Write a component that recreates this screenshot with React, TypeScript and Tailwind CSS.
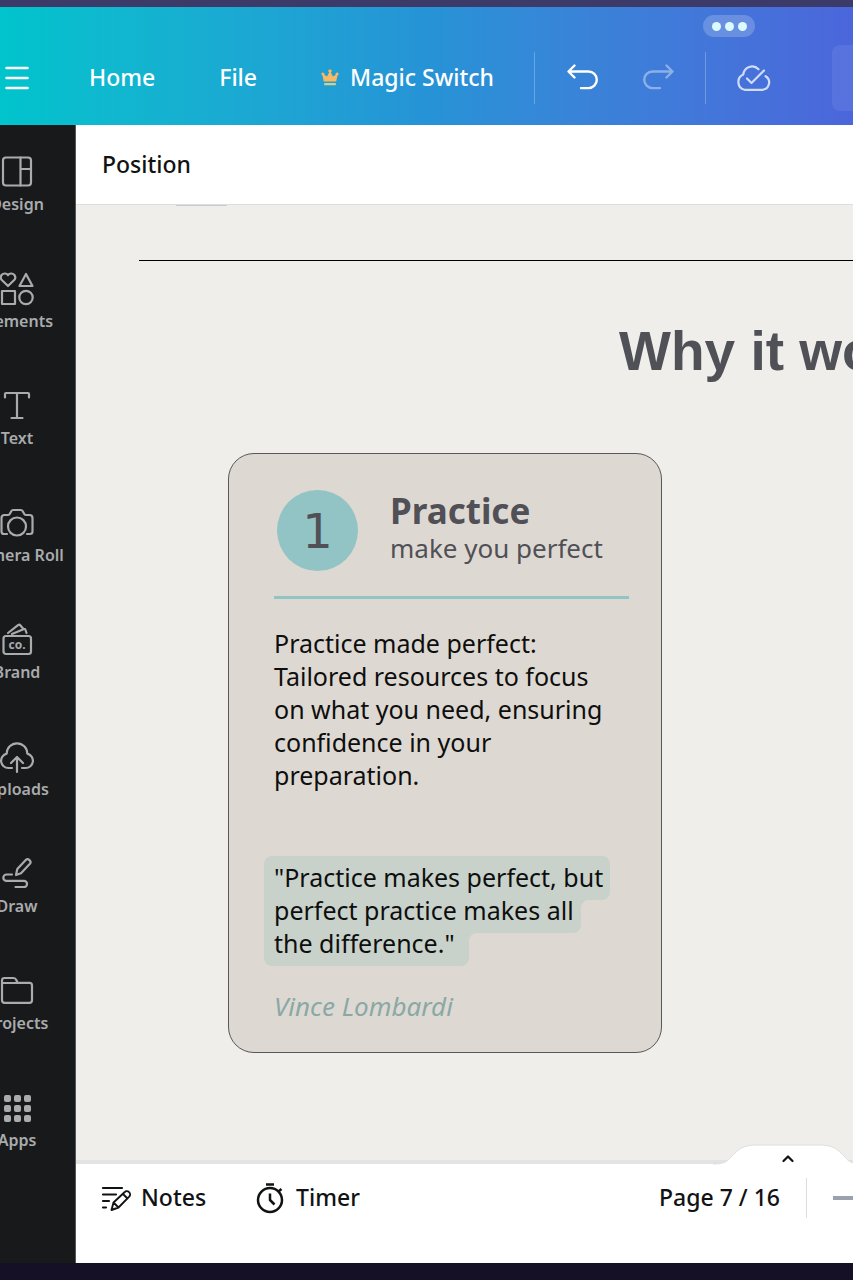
import type { ReactNode } from "react";

type SideItem = { label: string; icon: ReactNode };

const sideItems: SideItem[] = [
  {
    label: "Design",
    icon: (
      <>
        <rect x="3" y="2.5" width="28" height="28" rx="3" />
        <path d="M20.5 2.5v28M20.5 14h10.5" />
      </>
    ),
  },
  {
    label: "Elements",
    icon: (
      <>
        <path d="M8 14 1.800 8a4 4 0 0 1 0-5.200a4 4 0 0 1 6.200.4a4 4 0 0 1 6.200-.4a4 4 0 0 1 0 5.200Z" />
        <path d="M26 2 19.500 14h13Z" />
        <rect x="2" y="19" width="13" height="13" />
        <circle cx="26" cy="25.500" r="6.700" />
      </>
    ),
  },
  {
    label: "Text",
    icon: <path d="M5 8.500V5q0-1 1-1h22q1 0 1 1v3.500M17 4v25M11.500 29h11" />,
  },
  {
    label: "Camera Roll",
    icon: (
      <>
        <path d="M7 28H4q-2.500 0-2.500-2.500V12q0-3 3-3H8q1.500 0 2-1.500l.7-1.300Q11.500 4 13.500 4h7q2 0 2.800 2.200l.7 1.300q.5 1.500 2 1.500h3.500q3 0 3 3v13.500Q32.500 28 30 28h-3" />
        <circle cx="17" cy="20.500" r="9" />
      </>
    ),
  },
  {
    label: "Brand",
    icon: (
      <>
        <rect x="3.500" y="13" width="27.500" height="18" rx="2.500" />
        <path d="M8 10 18 2.200q1.500-1 2.500.3l2.500 3M12 11l11.500-4.800q1.500-.6 2 .8l1 3" />
        <text x="17" y="25.500" textAnchor="middle" fill="currentColor" stroke="none" fontSize="12" fontWeight="700" fontFamily="Noto Sans, sans-serif">
          co.
        </text>
      </>
    ),
  },
  {
    label: "Uploads",
    icon: (
      <>
        <path d="M12 28H8.500a7.300 7.300 0 0 1-1.800-14.400a10.300 10.300 0 0 1 20.600 0A7.300 7.300 0 0 1 25.500 28H22" />
        <path d="M17 32V17.500M11 23l6-6 6 6" />
      </>
    ),
  },
  {
    label: "Draw",
    icon: (
      <>
        <path d="m16 18 1.300-6L26 2.800q1.500-1.400 3.200.1l.6.600q1.600 1.600.1 3.300L21 16.200Z" />
        <path d="M12 17.500H6.500a3.200 3.200 0 0 0 0 6.400H24a3 3 0 0 1 0 6.100h-8.500" />
      </>
    ),
  },
  {
    label: "Projects",
    icon: (
      <path d="M2 9.500V6.500Q2 4 4.500 4h9q2 0 2.700 1.800l1.300 3H29.500q2.500 0 2.500 2.500v15q0 2.500-2.500 2.500h-25Q2 28.800 2 26.300V9h15.500" />
    ),
  },
  {
    label: "Apps",
    icon: (
      <g fill="currentColor" stroke="none">
        {[4, 14, 24].map((y) =>
          [4, 14, 24].map((x) => <rect key={`${x}-${y}`} x={x} y={y} width="7" height="7" rx="2" />),
        )}
      </g>
    ),
  },
];

function Header() {
  return (
    <header className="relative flex h-[118px] shrink-0 items-center overflow-hidden bg-linear-to-r from-[#00c4cc] via-[#2693d6] to-[#4b66db] pt-[24px] text-[23px] font-medium text-white">
      <button aria-label="Menu" className="ml-[5px] shrink-0">
        <svg width="24" height="24" viewBox="0 0 24 24" fill="none" stroke="currentColor" strokeWidth="2.500" strokeLinecap="round">
          <path d="M1.500 2h21M1.500 12h21M1.500 22h21" />
        </svg>
      </button>
      <a href="#home" className="ml-[60px] shrink-0 pb-[2px]">Home</a>
      <button className="ml-[64px] shrink-0 pb-[2px]">File</button>
      <button className="ml-[64px] flex shrink-0 items-center gap-[11px] pb-[2px] whitespace-nowrap">
        <svg width="18" height="18" viewBox="0 0 18 18" fill="#f7b965" className="mt-[2px]">
          <path d="M2.800 12.500 1.500 6.500a1.500 1.500 0 1 1 1.800-.8L6 7.500l2.200-4.200a1.600 1.600 0 1 1 1.600 0L12 7.500l2.700-1.800a1.500 1.500 0 1 1 1.800.8l-1.300 6Z" />
          <rect x="3" y="14" width="12" height="2.300" rx="1" fill="#cfd08f" />
        </svg>
        Magic Switch
      </button>
      <div className="ml-[40px] h-[52px] w-px shrink-0 bg-white/25" />
      <button aria-label="Undo" className="ml-[32px] shrink-0">
        <svg width="32" height="28" viewBox="0 0 32 28" fill="none" stroke="currentColor" strokeWidth="2.400" strokeLinecap="round" strokeLinejoin="round">
          <path d="m7.500 1.500-6 6 6 6M2 7.500h19.500a8.300 8.300 0 0 1 0 16.600H14" />
        </svg>
      </button>
      <button aria-label="Redo" className="ml-[44px] shrink-0 text-white/40">
        <svg width="32" height="28" viewBox="0 0 32 28" fill="none" stroke="currentColor" strokeWidth="2.400" strokeLinecap="round" strokeLinejoin="round">
          <path d="m23.500 1.500 6 6-6 6M29 7.500H9.500a8.300 8.300 0 0 0 0 16.600H17" />
        </svg>
      </button>
      <div className="ml-[30px] h-[52px] w-px shrink-0 bg-white/25" />
      <button aria-label="Saved" className="ml-[29px] shrink-0 text-white/75">
        <svg width="36" height="28" viewBox="0 0 36 28" fill="none" stroke="currentColor" strokeWidth="2.200" strokeLinecap="round" strokeLinejoin="round">
          <path d="M23.500 5.300A8.800 8.800 0 0 0 8.300 10.500A8.100 8.100 0 0 0 9.500 25.800H27A7.300 7.300 0 0 0 30.500 12.200" />
          <path d="m12 14.500 4.500 4.500L29 6.500" />
        </svg>
      </button>
      <button aria-label="Share" className="ml-[61px] h-[66px] w-[120px] shrink-0 rounded-lg bg-white/7" />
      <button aria-label="Window options" className="absolute top-[8px] left-[703px] flex h-[22px] w-[52px] items-center justify-center gap-[4px] rounded-full bg-white/20">
        <span className="size-[9px] rounded-full bg-[#dcfbff]" />
        <span className="size-[9px] rounded-full bg-[#dcfbff]" />
        <span className="size-[9px] rounded-full bg-[#dcfbff]" />
      </button>
    </header>
  );
}

function Sidebar() {
  return (
    <nav className="-ml-[41px] w-[117px] shrink-0 border-r border-[#55565a] bg-[#18191b]">
      {sideItems.map(({ label, icon }) => (
        <a key={label} href={`#${label}`} className="flex h-[117px] flex-col items-center pt-[30px] text-[#a9abad]">
          <svg width="34" height="34" viewBox="0 0 34 34" fill="none" stroke="currentColor" strokeWidth="2.200" strokeLinecap="round" strokeLinejoin="round" className="shrink-0 overflow-visible">
            {icon}
          </svg>
          <span className="mt-[3px] text-[16px] leading-[24px] font-semibold whitespace-nowrap">{label}</span>
        </a>
      ))}
    </nav>
  );
}

function PracticeCard() {
  return (
    <article className="relative ml-[152px] h-[600px] w-[434px] rounded-[26px] border border-[#58585a] bg-[#ddd9d2] px-[45px]">
      <div className="flex items-start pt-[36px]">
        <div className="flex size-[81px] items-center justify-center rounded-full bg-[#92c3c5] ml-[3px] font-['DejaVu_Sans'] text-[48px] leading-[48px] text-[#505056]">
          1
        </div>
        <div className="ml-[32px] whitespace-nowrap text-[#505056]">
          <h2 className="text-[35px] leading-[42px] font-bold">Practice</h2>
          <p className="text-[26px] leading-[32px]">make you perfect</p>
        </div>
      </div>
      <hr className="mt-[25px] -mr-[13px] h-[3px] border-0 bg-[#92c3c5]" />
      <p className="mt-[28px] text-[25px] leading-[33px] whitespace-nowrap text-[#0e0e0e]">
        Practice made perfect:
        <br />
        Tailored resources to focus
        <br />
        on what you need, ensuring
        <br />
        confidence in your
        <br />
        preparation.
      </p>
      <blockquote className="relative mt-[69px] text-[25px] leading-[33px] whitespace-nowrap text-[#0e0e0e]">
        <svg width="346" height="110" viewBox="0 0 346 110" fill="#c8d2cb" className="absolute -top-[5px] -left-[10px]">
          <path d="M8 0H338a8 8 0 0 1 8 8V36a8 8 0 0 1-8 8H325a8 8 0 0 0-8 8V69a8 8 0 0 1-8 8H213a8 8 0 0 0-8 8V102a8 8 0 0 1-8 8H8a8 8 0 0 1-8-8V8a8 8 0 0 1 8-8Z" />
        </svg>
        <p className="relative">
          "Practice makes perfect, but
          <br />
          perfect practice makes all
          <br />
          the difference."
        </p>
      </blockquote>
      <p className="mt-[30px] text-[26px] leading-[33px] text-[#8aa8a6] italic">Vince Lombardi</p>
    </article>
  );
}

function Footer() {
  return (
    <footer className="relative flex h-[103px] shrink-0 items-center border-t-4 border-[#e3e3e5] bg-white pr-[74px] pb-[32px] text-[23px] font-medium whitespace-nowrap text-[#111214]">
      <svg width="164" height="24" viewBox="0 0 164 24" className="absolute -top-[20px] right-[-16px]">
        <path d="M8 20C24 20 24 14 30 9C36 3 42 1 52 1H114C124 1 130 3 136 9C142 14 142 20 158 20V24H8Z" fill="#fff" />
        <path d="M8 20C24 20 24 14 30 9C36 3 42 1 52 1H114C124 1 130 3 136 9C142 14 142 20 158 20" fill="none" stroke="#dedee0" />
      </svg>
      <button aria-label="Show pages" className="absolute -top-[12px] right-[58px]">
        <svg width="14" height="12" viewBox="0 0 14 12" fill="none" stroke="currentColor" strokeWidth="2.200" strokeLinecap="round" strokeLinejoin="round">
          <path d="m2.500 9 4.500-4.500 4.500 4.500" />
        </svg>
      </button>
      <button className="ml-[25px] flex items-center gap-[10px]">
        <svg width="30" height="28" viewBox="0 0 30 28" fill="none" stroke="currentColor" strokeWidth="2.200" strokeLinecap="round" strokeLinejoin="round">
          <path d="M2 4h19M2 10.500h13M2 17h6M2 23.500h3" />
          <path d="m10.500 26 2-7.500L23.500 8.300a3.200 3.200 0 0 1 4.700 4.400L17.500 23.500ZM12.500 18.500l5 5M22 10l4.500 4.500" strokeWidth="1.900" />
        </svg>
        Notes
      </button>
      <button className="ml-[50px] flex items-center gap-[12px]">
        <svg width="28" height="32" viewBox="0 0 28 32" fill="none" stroke="currentColor" strokeWidth="2.500" strokeLinejoin="round">
          <circle cx="14" cy="18" r="12" />
          <path d="M10 2.500h8M22.500 9.500l3-2.500M14 11.500V18l4.500 4.500" />
        </svg>
        Timer
      </button>
      <span className="ml-auto">Page 7 / 16</span>
      <div className="ml-[26px] h-[40px] w-px bg-[#dcdde0]" />
      <button aria-label="Zoom out" className="-mr-[74px] ml-[26px] h-[4px] w-[20px] bg-[#9aa3ad]" />
    </footer>
  );
}

export default function App() {
  return (
    <div className="flex min-h-screen flex-col overflow-hidden bg-[#151025] font-['Noto_Sans',sans-serif]">
      <div className="h-[7px] shrink-0 bg-[#3b3a69]" />
      <Header />
      <div className="flex flex-1">
        <Sidebar />
        <div className="flex min-w-0 flex-1 flex-col">
          <div className="flex h-[80px] shrink-0 items-center border-b border-[#dededc] bg-white pl-[26px] text-[23px] font-medium text-[#111214]">
            <button>Position</button>
          </div>
          <main className="flex-1 overflow-hidden bg-[#efeeea]">
            <div className="ml-[100px] h-px w-[51px] bg-[#c9c9cf]" />
            <div className="mt-[54px] ml-[63px] h-px bg-black" />
            <h1 className="mt-[58px] ml-[543px] font-['Liberation_Sans'] text-[55px] leading-[64px] font-bold whitespace-nowrap text-[#505057]">
              Why it works
            </h1>
            <div className="mt-[70px]">
              <PracticeCard />
            </div>
          </main>
          <Footer />
        </div>
      </div>
      <div className="h-[17px] shrink-0 bg-[#151025]" />
    </div>
  );
}
